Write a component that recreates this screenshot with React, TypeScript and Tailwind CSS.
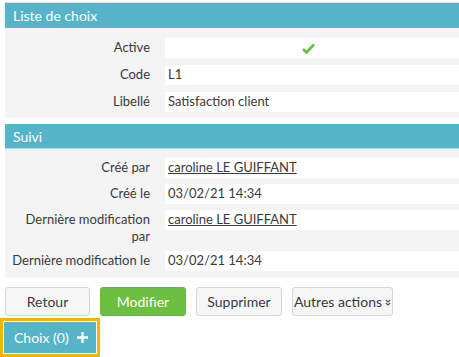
import React from 'react';

const font = { fontFamily: 'Lato, "Open Sans", sans-serif' };

const Row = ({
  label,
  children,
}: {
  label: React.ReactNode;
  children?: React.ReactNode;
}) => (
  <div className='flex items-start'>
    <div className='w-[145px] shrink-0 whitespace-nowrap pt-[1px] text-right leading-[17px]'>{label}</div>
    <div className='ml-[15px] flex h-[20px] flex-1 items-center bg-white pl-[3px]'>{children}</div>
  </div>
);

export default function App() {
  return (
    <div className='h-[357px] w-[459px] overflow-hidden bg-white text-[13px] text-[#3a3a3a]' style={font}>
      <div className='pl-[5px] pt-[2px]'>
        <div className='border-t border-[#e4e4e4]'>
          {/* Liste de choix */}
          <div className='flex h-[25px] items-center bg-[#56b4c8] pl-[8px] text-[14px] text-white'>Liste de choix</div>
          <div className='flex flex-col gap-[7px] bg-[#f4f4f4] pb-[6px] pt-[10px]'>
            <Row label='Active'>
              <div className='flex flex-1 justify-center pr-[10px]'>
                <svg width='13' height='11' viewBox='0 0 13 11'>
                  <path d='M1 6 L4.5 9.5 L12 1.5' stroke='#6abf3f' strokeWidth='2.6' fill='none' />
                </svg>
              </div>
            </Row>
            <Row label='Code'>L1</Row>
            <Row label='Libellé'>Satisfaction client</Row>
          </div>
        </div>

        {/* Suivi */}
        <div className='mt-[6px] flex h-[25px] items-center border-b border-[#a9dbe6] bg-[#56b4c8] pl-[8px] text-[14px] text-white'>Suivi</div>
        <div className='flex flex-col gap-[6px] bg-[#f4f4f4] pb-[7px] pt-[9px]'>
          <Row label='Créé par'>
            <span className='underline'>caroline LE GUIFFANT</span>
          </Row>
          <Row label='Créé le'>03/02/21 14:34</Row>
          <Row label={<>Dernière modification<br />par</>}>
            <span className='underline'>caroline LE GUIFFANT</span>
          </Row>
          <Row label='Dernière modification le'>03/02/21 14:34</Row>
        </div>

        {/* Actions */}
        <div className='mt-[9px] flex gap-[10px] text-[14px]'>
          <button className='h-[29px] w-[85px] rounded-[3px] border border-[#d6d6d6] bg-[#f6f6f6]'>Retour</button>
          <button className='h-[29px] w-[86px] rounded-[3px] border border-[#64b839] bg-[#6cbf40] text-white'>Modifier</button>
          <button className='h-[29px] w-[86px] rounded-[3px] border border-[#d6d6d6] bg-[#f6f6f6]'>Supprimer</button>
          <button className='flex h-[29px] w-[101px] items-center justify-center gap-[3px] rounded-[3px] border border-[#d6d6d6] bg-[#f6f6f6]'>
            Autres actions
            <svg width='6' height='7' viewBox='0 0 6 7' className='mt-[2px]'>
              <path d='M0.8 1 L3 3 L5.2 1 M0.8 4 L3 6 L5.2 4' stroke='#555' strokeWidth='1.1' fill='none' />
            </svg>
          </button>
        </div>
      </div>

      {/* Choix */}
      <div className='mt-[2px] w-[100px] border-[3px] border-[#f5b400] p-[1px]'>
        <div className='flex h-[31px] items-center justify-between bg-[#56b4c8] pl-[10px] pr-[8px] text-[14px] text-white'>
          <span>Choix (0)</span>
          <svg width='11' height='11' viewBox='0 0 11 11'>
            <path d='M5.5 0 V11 M0 5.5 H11' stroke='white' strokeWidth='2.4' />
          </svg>
        </div>
      </div>
    </div>
  );
}
